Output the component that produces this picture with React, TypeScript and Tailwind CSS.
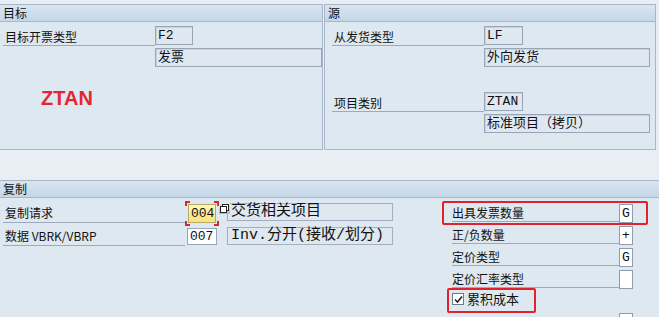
import React from "react";

const cjk = "font-['Noto_Sans_CJK_SC','Noto_Sans',sans-serif]";
const mono = "font-['Liberation_Mono','Noto_Sans_CJK_SC',monospace]";

function Header({ children }: { children: React.ReactNode }) {
  return (
    <div
      className={`h-[17px] border-b border-[#a7b6c9] bg-gradient-to-b from-[#d9e6f1] to-[#c4d6e7] pl-[3px] text-[12px] leading-[16px] text-[#111] ${cjk}`}
    >
      {children}
    </div>
  );
}

function DisplayBox({ text, w, h = 19 }: { text: string; w: string; h?: number }) {
  return (
    <div
      className={`${w} ${h === 19 ? "h-[19px]" : "h-[18px]"} shrink-0 border border-[#97a5b7] bg-[#dfe8f1] pl-[2px] text-[13px] leading-[17px] text-[#111] shadow-[inset_1px_1px_0_#c9d3de] ${mono}`}
    >
      {text}
    </div>
  );
}

function FieldRow({
  label,
  box,
  boxW,
  labelW,
  indent,
}: {
  label: string;
  box: string;
  boxW: string;
  labelW: string;
  indent: string;
}) {
  return (
    <div className={`flex h-[19px] ${indent}`}>
      <div
        className={`${labelW} h-[20px] border-b border-[#9eaabb] pl-[2px] pt-[3px] text-[12px] leading-[15px] text-[#111] ${cjk}`}
      >
        {label}
      </div>
      <DisplayBox text={box} w={boxW} />
    </div>
  );
}

function CheckRow({ label, value, last }: { label: string; value: string; last?: boolean }) {
  return (
    <div className="flex h-[22px]">
      <div
        className={`w-[167px] h-[22px] ${last ? "" : "border-b border-[#9eaabb]"} pt-[5px] text-[12px] leading-[15px] text-[#111] ${cjk}`}
      >
        {label}
      </div>
      <div
        className={`mt-[4px] h-[19px] w-[14px] shrink-0 border border-[#8f9cad] bg-white text-center text-[13px] leading-[17px] text-[#111] ${mono}`}
      >
        {value}
      </div>
    </div>
  );
}

function Corner({ pos }: { pos: string }) {
  return <span className={`absolute h-[5px] w-[5px] border-[#d42a35] ${pos}`} />;
}

export default function App() {
  return (
    <div className="h-[317px] w-[659px] overflow-hidden bg-[#e9eef4] text-[#111]">
      {/* top panels */}
      <div className="flex pt-[4px]">
        <section className="h-[146px] w-[323px] border-y border-r border-[#a7b6c9] bg-[#dee8f1]">
          <Header>目标</Header>
          <div className="pt-[4px]">
            <FieldRow label="目标开票类型" box="F2" boxW="w-[38px]" labelW="w-[152px]" indent="ml-[3px]" />
            <div className="mt-[3px] pl-[155px]">
              <DisplayBox text="发票" w="w-[167px]" />
            </div>
            <div className="ml-[41px] mt-[21px] font-['Liberation_Sans',sans-serif] text-[20px] font-bold leading-[20px] text-[#e5262f]">
              ZTAN
            </div>
          </div>
        </section>
        <section className="ml-px h-[146px] w-[332px] border border-[#a7b6c9] bg-[#dee8f1]">
          <Header>源</Header>
          <div className="pt-[4px]">
            <FieldRow label="从发货类型" box="LF" boxW="w-[39px]" labelW="w-[152px]" indent="ml-[7px]" />
            <div className="mt-[3px] pl-[159px]">
              <DisplayBox text="外向发货" w="w-[166px]" />
            </div>
            <div className="mt-[25px]">
              <FieldRow label="项目类别" box="ZTAN" boxW="w-[39px]" labelW="w-[152px]" indent="ml-[7px]" />
            </div>
            <div className="mt-[3px] pl-[159px]">
              <DisplayBox text="标准项目（拷贝）" w="w-[166px]" />
            </div>
          </div>
        </section>
      </div>

      {/* copy section */}
      <section className="mt-[30px] h-[140px] border-t border-[#a7b6c9] bg-[#dee8f1]">
        <Header>复制</Header>
        <div className="flex">
          <div className="relative w-[452px] pt-[5px]">
            <div className="flex h-[20px]">
              <div
                className={`ml-[3px] h-[20px] w-[182px] border-b border-[#9eaabb] pl-[2px] pt-[2px] text-[12px] leading-[16px] ${cjk}`}
              >
                复制请求
              </div>
              <div className="relative ml-[3px] mt-px">
                <div
                  className={`h-[19px] w-[28px] border border-[#b9a968] bg-gradient-to-b from-[#fff6b8] to-[#f9e27c] pl-[2px] text-[13px] leading-[17px] ${mono}`}
                >
                  004
                </div>
                <Corner pos="-left-[3px] -top-[3px] border-l-2 border-t-2" />
                <Corner pos="-right-[3px] -top-[3px] border-r-2 border-t-2" />
                <Corner pos="-left-[3px] -bottom-[3px] border-l-2 border-b-2" />
                <Corner pos="-right-[3px] -bottom-[3px] border-r-2 border-b-2" />
              </div>
              <div
                className={`ml-[11px] h-[18px] w-[166px] border border-[#a3afbe] bg-[#dfe7ef] pl-[3px] text-[15px] leading-[16px] ${mono}`}
              >
                交货相关项目
              </div>
              <div className="absolute left-[219px] top-[5px] flex h-[11px] w-[11px] items-center justify-center bg-gradient-to-b from-[#e6ebf0] to-[#aeb8c4]">
                <svg width="9" height="9" viewBox="0 0 9 9">
                  <rect x="2.5" y="0.5" width="6" height="6" fill="#fff" stroke="#222" />
                  <rect x="0.5" y="2.5" width="6" height="6" fill="#fff" stroke="#222" />
                </svg>
              </div>
            </div>
            <div className="mt-[3px] flex h-[20px]">
              <div
                className={`ml-[3px] h-[20px] w-[182px] border-b border-[#9eaabb] pl-[2px] pt-[2px] text-[12px] leading-[16px] ${cjk}`}
              >
                数据 VBRK/VBRP
              </div>
              <div
                className={`ml-[2px] mt-[2px] h-[17px] w-[30px] border border-[#9aa6b6] bg-white pl-[2px] text-[13px] leading-[15px] ${mono}`}
              >
                007
              </div>
              <div
                className={`ml-[10px] mt-px h-[18px] w-[166px] border border-[#a3afbe] bg-[#dfe7ef] pl-[3px] text-[15px] leading-[16px] ${mono}`}
              >
                Inv.分开(接收/划分)
              </div>
            </div>
          </div>

          <div className="relative w-[181px] pt-[2px]">
            <CheckRow label="出具发票数量" value="G" />
            <CheckRow label="正/负数量" value="+" />
            <CheckRow label="定价类型" value="G" />
            <CheckRow label="定价汇率类型" value="" />
            <div className="flex h-[22px] items-end">
              <div className="mb-[3px] flex items-center">
                <span className="flex h-[12px] w-[12px] items-center justify-center border border-[#6f7c8c] bg-white">
                  <svg width="9" height="9" viewBox="0 0 9 9">
                    <path d="M1 4.5 L3.5 7 L8 1.5" fill="none" stroke="#222" strokeWidth="1.6" />
                  </svg>
                </span>
                <span className={`ml-[3px] text-[13px] leading-[16px] ${cjk}`}>累积成本</span>
              </div>
            </div>
            <div className="ml-[167px] mt-[3px] h-[19px] w-[14px] border border-[#8f9cad] bg-white" />
            <div className="absolute left-[-10px] top-[3px] h-[24px] w-[206px] rounded-[2px] border-2 border-[#e0222c]" />
            <div className="absolute left-[-5px] top-[90px] h-[25px] w-[89px] rounded-[2px] border-2 border-[#e0222c]" />
          </div>
        </div>
      </section>
    </div>
  );
}
